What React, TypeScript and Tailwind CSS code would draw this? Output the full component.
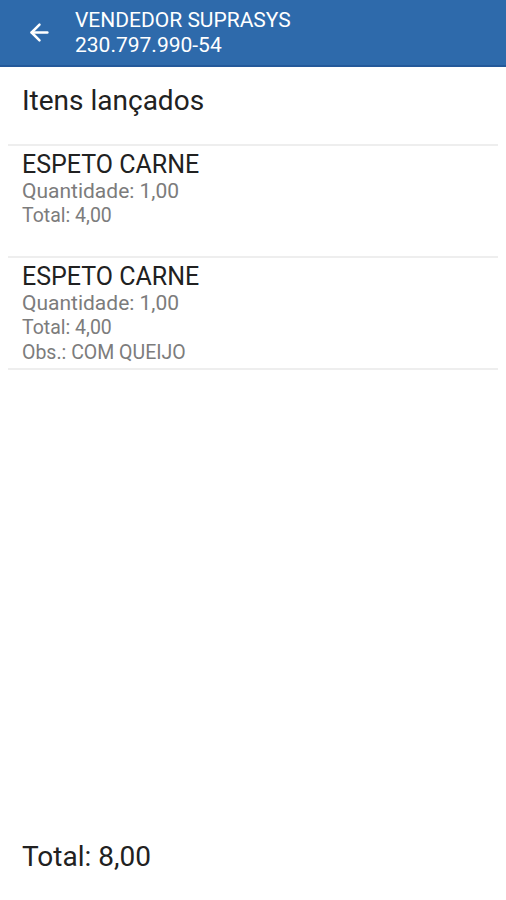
import { ArrowLeft } from 'lucide-react'

const items = [
  { name: 'ESPETO CARNE', qty: '1,00', total: '4,00' },
  { name: 'ESPETO CARNE', qty: '1,00', total: '4,00', obs: 'COM QUEIJO' },
]

export default function App() {
  return (
    <div className="flex h-[900px] w-[506px] flex-col bg-white font-['Roboto',sans-serif]">
      <header className="flex h-[67px] items-center border-b-2 border-[#24599a] bg-[#2e6aab] text-white">
        <div className="flex w-[75px] justify-center pl-[3px]">
          <ArrowLeft className="h-[27px] w-[27px]" strokeWidth={2.2} />
        </div>
        <div className="flex flex-col text-[21px] leading-[25px]">
          <span>VENDEDOR SUPRASYS</span>
          <span>230.797.990-54</span>
        </div>
      </header>

      <h1 className="px-[22px] pt-[17px] pb-[26px] text-[28px] leading-[34px] text-[#212121]">
        Itens lançados
      </h1>

      <ul className="px-[8px]">
        {items.map((item, i) => (
          <li key={i} className="h-[112px] border-t-2 border-[#eeeeee] px-[14px] pt-[5px] last:h-[114px] last:border-b-2">
            <div className="text-[25px] leading-[28px] text-[#212121]">{item.name}</div>
            <div className="text-[21px] leading-[24px] text-[#7c7c7c]">Quantidade: {item.qty}</div>
            <div className="text-[19.5px] leading-[25px] text-[#7c7c7c]">Total: {item.total}</div>
            {item.obs && (
              <div className="text-[19.5px] leading-[25px] text-[#7c7c7c]">Obs.: {item.obs}</div>
            )}
          </li>
        ))}
      </ul>

      <div className="mt-auto px-[22px] pb-[26px] text-[28px] leading-[34px] text-[#212121]">
        Total: 8,00
      </div>
    </div>
  )
}
